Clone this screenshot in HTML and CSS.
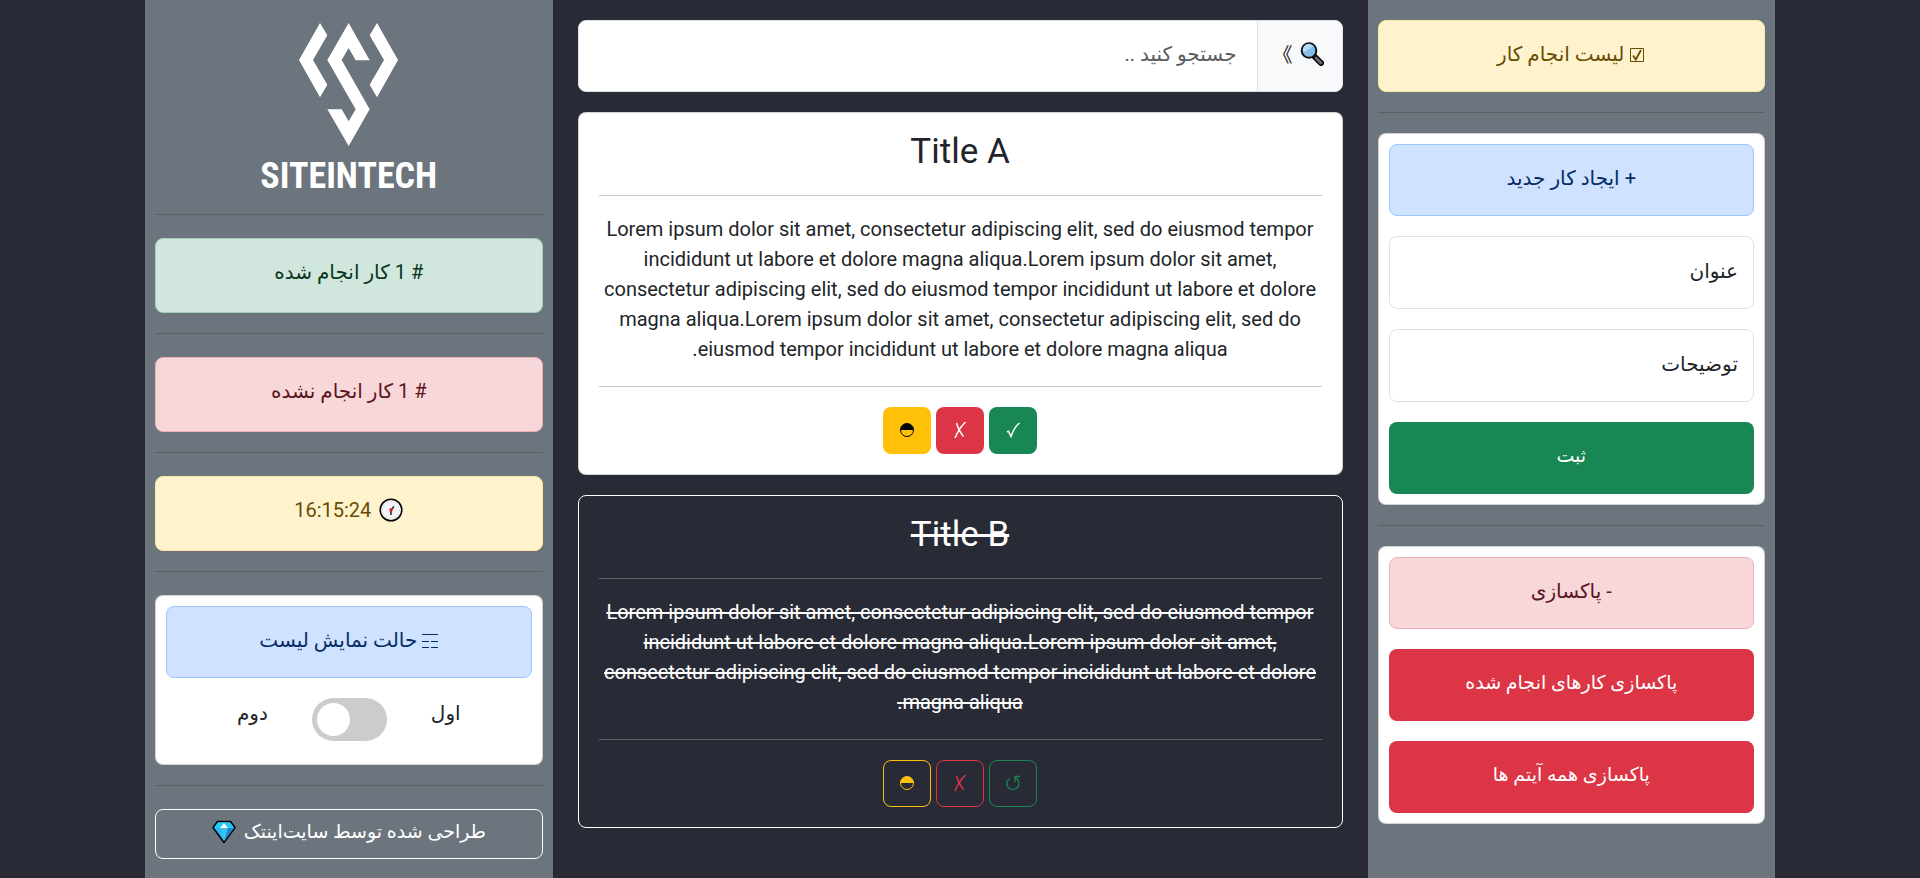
FILE: index.html
```html
<!DOCTYPE html>
<html lang="fa" dir="rtl">
<head>
<meta charset="utf-8">
<meta name="viewport" content="width=device-width, initial-scale=1">
<title>لیست انجام کار</title>
<link rel="stylesheet" href="styles.css">
</head>
<body>
<div class="layout">
  <aside class="sidebar">
    <div class="alert alert-warning">
      <svg class="glyph" viewBox="0 0 16 16" aria-hidden="true"><path d="M1.500 1.500h13v13h-13z" fill="none" stroke="currentColor"/><path d="M4 8.500l2.800 4L12 3" fill="none" stroke="currentColor" stroke-width="1.800"/></svg>
      لیست انجام کار
    </div>
    <hr>
    <form class="card panel">
      <div class="alert alert-primary">+ ایجاد کار جدید</div>
      <input class="field" type="text" placeholder="عنوان" aria-label="عنوان">
      <textarea class="field" rows="1" placeholder="توضیحات" aria-label="توضیحات"></textarea>
      <button class="btn btn-success btn-block" type="button">ثبت</button>
    </form>
    <hr>
    <section class="card panel">
      <div class="alert alert-danger">- پاکسازی</div>
      <button class="btn btn-danger btn-block" type="button">پاکسازی کارهای انجام شده</button>
      <button class="btn btn-danger btn-block" type="button">پاکسازی همه آیتم ها</button>
    </section>
  </aside>

  <main class="content">
    <div class="search">
      <label class="search-addon" for="search" aria-label="جستجو">
        <svg class="emoji" viewBox="0 0 24 24" aria-hidden="true"><path d="M14.500 14.500l6.500 6.500" stroke="#000" stroke-width="6" stroke-linecap="round"/><path d="M16 16l5 5" stroke="#686e74" stroke-width="3" stroke-linecap="round"/><circle cx="9" cy="8.500" r="7.300" fill="#83beec" stroke="#111" stroke-width="2"/><path d="M3.500 10.500A6 6 0 0 1 13.500 4z" fill="#b5dcf5"/></svg>
        <span class="arrow">》</span>
      </label>
      <input class="search-input" id="search" type="text" placeholder="جستجو کنید ..">
    </div>

    <article class="card task">
      <h3 class="task-title">Title A</h3>
      <hr>
      <p class="task-text">Lorem ipsum dolor sit amet, consectetur adipiscing elit, sed do eiusmod tempor incididunt ut labore et dolore magna aliqua.Lorem ipsum dolor sit amet, consectetur adipiscing elit, sed do eiusmod tempor incididunt ut labore et dolore magna aliqua.Lorem ipsum dolor sit amet, consectetur adipiscing elit, sed do eiusmod tempor incididunt ut labore et dolore magna aliqua.</p>
      <hr>
      <div class="actions">
        <button class="btn btn-icon btn-success" type="button" aria-label="انجام شد"><svg class="glyph" viewBox="0 0 16 16"><path d="M2 10l1.500-.8L6 14.500C8 9 10.500 4 14.500 1" fill="none" stroke="currentColor" stroke-width="1.500"/></svg></button>
        <button class="btn btn-icon btn-danger" type="button" aria-label="حذف"><svg class="glyph" viewBox="0 0 16 16"><path d="M13.500 0C9 4.500 5.500 9.500 3 16M4.500 1C6 6 8.500 11 11.500 14.500" fill="none" stroke="currentColor" stroke-width="1.500"/></svg></button>
        <button class="btn btn-icon btn-warning" type="button" aria-label="ویرایش"><svg class="glyph" viewBox="0 0 16 16"><circle cx="8" cy="8" r="6.500" fill="none" stroke="currentColor"/><path d="M1.500 8a6.500 6.500 0 0 1 13 0z" fill="currentColor"/></svg></button>
      </div>
    </article>

    <article class="card task task-done">
      <h3 class="task-title">Title B</h3>
      <hr>
      <p class="task-text">Lorem ipsum dolor sit amet, consectetur adipiscing elit, sed do eiusmod tempor incididunt ut labore et dolore magna aliqua.Lorem ipsum dolor sit amet, consectetur adipiscing elit, sed do eiusmod tempor incididunt ut labore et dolore magna aliqua.</p>
      <hr>
      <div class="actions">
        <button class="btn btn-icon btn-outline-success" type="button" aria-label="بازگردانی"><svg class="glyph" viewBox="0 0 16 16"><path d="M4.500 3.500A6 6 0 1 0 12.500 4.500L10 2M10 7V1.500h5" fill="none" stroke="currentColor" stroke-width="1.300"/></svg></button>
        <button class="btn btn-icon btn-outline-danger" type="button" aria-label="حذف"><svg class="glyph" viewBox="0 0 16 16"><path d="M13.500 0C9 4.500 5.500 9.500 3 16M4.500 1C6 6 8.500 11 11.500 14.500" fill="none" stroke="currentColor" stroke-width="1.500"/></svg></button>
        <button class="btn btn-icon btn-outline-warning" type="button" aria-label="ویرایش"><svg class="glyph" viewBox="0 0 16 16"><circle cx="8" cy="8" r="6.500" fill="none" stroke="currentColor"/><path d="M1.500 8a6.500 6.500 0 0 1 13 0z" fill="currentColor"/></svg></button>
      </div>
    </article>
  </main>

  <aside class="sidebar sidebar-stats">
    <div class="logo">
      <svg class="logo-mark" viewBox="478 68 297 369" aria-hidden="true"><g fill="#fff"><path d="M541 68l22 37-43 74 43 74-22 38-63-112z"/><path d="M712 68l-22 37 43 74-43 74 22 38 63-112z"/><path d="M627 68l63 112h-42l-21-37-21 36 84 148-63 110-64-110h43l21 36 21-36-85-148z"/></g></svg>
      <span class="logo-text">SITEINTECH</span>
    </div>
    <hr>
    <div class="alert alert-tall alert-success"># 1 کار انجام شده</div>
    <hr>
    <div class="alert alert-tall alert-danger"># 1 کار انجام نشده</div>
    <hr>
    <div class="alert alert-tall alert-warning with-emoji">
      <svg class="emoji" viewBox="0 0 24 24" aria-hidden="true"><circle cx="12" cy="12" r="10.800" fill="#f4f4f8" stroke="#000" stroke-width="1.500"/><circle cx="12" cy="12" r="8.500" fill="none" stroke="#aaa" stroke-dasharray=".8 3.650"/><path d="M12 17v-5l3-3.500" fill="none" stroke="#222" stroke-width="1.500"/><circle cx="12" cy="12" r="1.700" fill="#e81224"/></svg>
      <span>16:15:24</span>
    </div>
    <hr>
    <section class="card panel">
      <div class="alert alert-primary">
        <svg class="glyph" viewBox="0 0 16 16" aria-hidden="true"><path d="M0 1.500h16M0 8.500h7M9 8.500h7M0 14.500h7M9 14.500h7" fill="none" stroke="currentColor" stroke-width="1.200"/></svg>
        حالت نمایش لیست
      </div>
      <div class="mode">
        <label for="mode">اول</label>
        <input class="toggle" id="mode" type="checkbox">
        <label for="mode">دوم</label>
      </div>
    </section>
    <hr>
    <a class="credit with-emoji" href="#"><span>طراحی شده توسط سایت‌اینتک</span>
      <svg class="emoji" viewBox="0 0 24 24" aria-hidden="true"><path d="M5.500 1.500h13l4.500 6L12 22.500 1 7.500z" fill="#32b4ee" stroke="#000" stroke-width="1.500" stroke-linejoin="round"/><path d="M6 2.500h6L8 8H2z" fill="#18d1f5"/><path d="M12 2.500h6L22 8h-6z" fill="#22c8f1"/><path d="M12 3l4 5H8z" fill="#fff"/><path d="M8 8h8l-4 13z" fill="#36c5f4"/><path d="M16 8h6L12 21.500z" fill="#2387cf"/></svg>
    </a>
  </aside>
</div>
</body>
</html>
```
FILE: styles.css
```css
*, *::before, *::after { box-sizing: border-box; }

body {
  margin: 0;
  background: #282a36;
  color: #212529;
  font-family: Roboto, "DejaVu Sans", sans-serif;
  font-size: 20px;
  line-height: 30px;
}

.layout {
  display: grid;
  grid-template-columns: 1fr 2fr 1fr;
  width: calc(85% - 2px);
  min-height: 100vh;
  margin: 0 auto;
}

hr {
  height: 1px;
  margin: 20px 0;
  border: 0;
  color: inherit;
  background: currentColor;
  opacity: .25;
}

.sidebar { padding: 20px 10px; background: #6c757d; }
.sidebar-stats { padding-bottom: 16px; }
.sidebar-stats > hr { margin-bottom: 23px; }

.content {
  display: flex;
  flex-direction: column;
  gap: 20px;
  padding: 20px 25px;
}

.card {
  border: 1px solid rgba(0, 0, 0, .175);
  border-radius: 8px;
  background: #fff;
}

.panel { display: flex; flex-direction: column; gap: 20px; padding: 10px; }

.alert {
  padding: 18px 20px 22px;
  border: 1px solid;
  border-radius: 8px;
  text-align: center;
}
.alert-tall { padding-bottom: 25px; }
.alert-warning { background: #fff3cd; border-color: #ffe69c; color: #664d03; }
.alert-primary { background: #cfe2ff; border-color: #9ec5fe; color: #052c65; }
.alert-danger { background: #f8d7da; border-color: #f1aeb5; color: #58151c; }
.alert-success { background: #d1e7dd; border-color: #a3cfbb; color: #0a3622; }

.glyph { width: 16px; height: 16px; vertical-align: -2px; }
.emoji { flex: none; width: 24px; height: 24px; }
.with-emoji { display: flex; align-items: center; justify-content: center; gap: 8px; }

.field {
  display: block;
  width: 100%;
  height: 73px;
  padding: 19px 15px 22px;
  border: 1px solid #dee2e6;
  border-radius: 8px;
  background: #fff;
  color: #212529;
  font: inherit;
  resize: none;
  overflow: hidden;
}
.field::placeholder { color: #212529; opacity: 1; }

.btn {
  border: 1px solid transparent;
  border-radius: 8px;
  color: #fff;
  font: inherit;
  font-weight: 500;
  text-align: center;
}
.btn-block { width: 100%; padding: 18px 15px 22px; font-size: 19px; }
.btn-icon { width: 48px; height: 47px; padding: 0 0 4px; }
.btn-success { background: #198754; }
.btn-danger { background: #dc3545; }
.btn-warning { background: #ffc107; color: #000; }
.btn-outline-success { background: none; border-color: #198754; color: #198754; }
.btn-outline-danger { background: none; border-color: #dc3545; color: #dc3545; }
.btn-outline-warning { background: none; border-color: #ffc107; color: #ffc107; }

.search {
  display: flex;
  height: 72px;
  border: 1px solid #dee2e6;
  border-radius: 8px;
  background: #fff;
  overflow: hidden;
}
.search-addon {
  display: flex;
  align-items: center;
  gap: 7px;
  padding: 0 18px 4px 0;
  width: 85px;
  border-left: 1px solid #dee2e6;
  background: #f8f9fa;
}
.arrow { font-family: "Noto Sans CJK JP", sans-serif; }
.search-input {
  flex: 1;
  min-width: 0;
  padding: 0 20px 4px;
  border: 0;
  background: none;
  font: inherit;
}
.search-input::placeholder { color: #595c5f; opacity: 1; }

.task { padding: 18px 20px 20px; text-align: center; }
.task hr { margin: 20px 0 18px; }
.task-title { margin: 0; padding-bottom: 2px; font-size: 35px; font-weight: 400; line-height: 42px; }
.task-text { margin: 0; padding-bottom: 2px; }
.actions { display: flex; justify-content: center; gap: 5px; padding-top: 2px; }
.task-done { background: none; border-color: #fff; color: #fff; }
.task-done .task-title { text-decoration: line-through 3px; }
.task-done .task-text { text-decoration: line-through 2px; }

.logo { display: flex; flex-direction: column; align-items: center; gap: 13px; padding-top: 3px; }
.logo-mark { width: 99px; height: 123px; }
.logo-text {
  color: #fff;
  font-family: "Noto Sans ExtraCondensed", "Open Sans ExtraCondensed", "Roboto Condensed", "Liberation Sans Narrow", sans-serif;
  font-size: 36px;
  font-weight: 700;
  line-height: 35px;
}

.mode { display: flex; justify-content: center; gap: 44px; padding-bottom: 13px; }
.toggle {
  appearance: none;
  width: 75px;
  height: 43px;
  margin: 0;
  border-radius: 22px;
  background: #ccc;
  direction: ltr;
}
.toggle::before {
  content: "";
  display: block;
  width: 33px;
  height: 33px;
  margin: 5px;
  border-radius: 50%;
  background: #fff;
}
.toggle:checked { background: #0d6efd; }
.toggle:checked::before { margin-left: 37px; }

.credit {
  padding: 7px 15px 11px;
  border: 1px solid #fff;
  border-radius: 8px;
  color: #fff;
  font-size: 19px;
  font-weight: 500;
  text-decoration: none;
}
```
